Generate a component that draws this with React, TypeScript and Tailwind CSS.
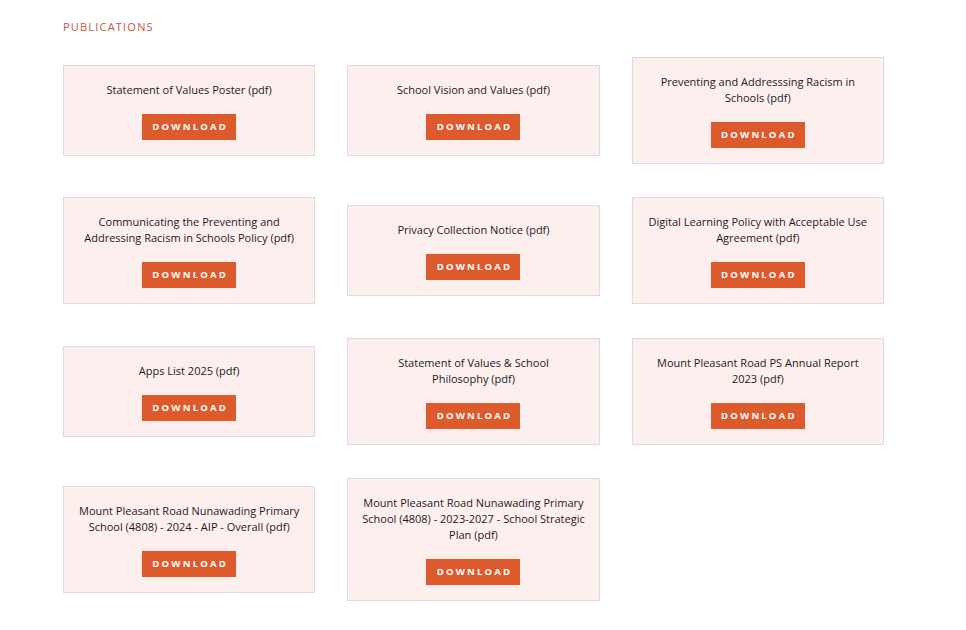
const PUBLICATIONS = [
  'Statement of Values Poster (pdf)',
  'School Vision and Values (pdf)',
  'Preventing and Addresssing Racism in Schools (pdf)',
  'Communicating the Preventing and Addressing Racism in Schools Policy (pdf)',
  'Privacy Collection Notice (pdf)',
  'Digital Learning Policy with Acceptable Use Agreement (pdf)',
  'Apps List 2025 (pdf)',
  'Statement of Values & School Philosophy (pdf)',
  'Mount Pleasant Road PS Annual Report 2023 (pdf)',
  'Mount Pleasant Road Nunawading Primary School (4808) - 2024 - AIP - Overall (pdf)',
  'Mount Pleasant Road Nunawading Primary School (4808) - 2023-2027 - School Strategic Plan (pdf)',
];

// keep "(pdf)" glued to the word before it, like the source site
const glue = (t: string) => t.replace(/ \(pdf\)$/, '\u00a0(pdf)');

export default function App() {
  return (
    <div className="min-h-screen bg-white font-['Open_Sans',sans-serif] text-[#1c1c1c]">
      <div className="w-[821px] ml-[63px] pt-[19px]">
        <h2 className="text-[11px] leading-4 tracking-[1.2px] text-[#c8553d] uppercase">
          Publications
        </h2>
        <div className="mt-[22px] grid grid-cols-3 gap-x-8 gap-y-[33.4px] items-center">
          {PUBLICATIONS.map((title) => (
            <div
              key={title}
              className="border border-[#dcdcdc] bg-[#fdefee] px-3 pt-4 pb-[15px] flex flex-col items-center text-center"
            >
              <p className="text-[11px] leading-4">{glue(title)}</p>
              <button className="mt-4 h-[26px] w-[94px] bg-[#dd5a2c] text-white text-[9.5px] font-bold tracking-[2.2px] pl-[2px]">
                DOWNLOAD
              </button>
            </div>
          ))}
        </div>
      </div>
    </div>
  );
}
